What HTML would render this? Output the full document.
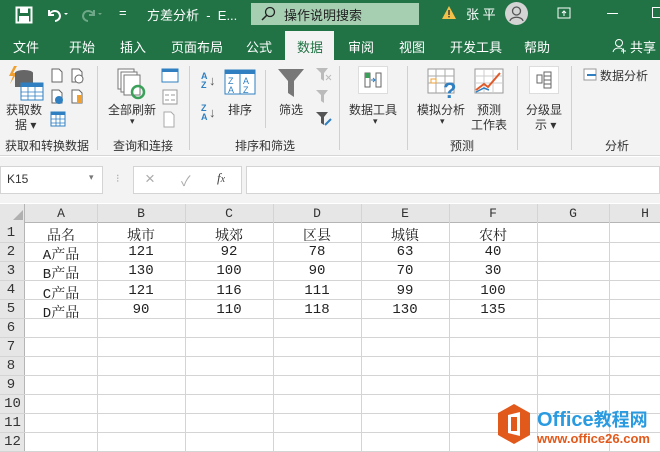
<!DOCTYPE html>
<html><head><meta charset="utf-8"><style>
*{margin:0;padding:0;box-sizing:border-box}
body{width:660px;height:452px;overflow:hidden;position:relative;background:#fff;font-family:"Liberation Sans","Noto Sans CJK SC",sans-serif}
.a{position:absolute}
.t{color:#fff;font-size:13px;position:absolute;white-space:nowrap}
.r{font-size:12px;color:#333;position:absolute;white-space:nowrap}
.ic{position:absolute}
.cell{position:absolute;font-family:"Liberation Mono","Noto Serif CJK SC",serif;font-size:14px;color:#222;text-align:center;white-space:nowrap;margin-top:1px}
.hd{position:absolute;font-family:"Liberation Mono","Noto Serif CJK SC",serif;font-size:13px;color:#333;text-align:center}
.vl{position:absolute;top:204px;width:1px;height:248px;background:#d4d4d4}
.hl{position:absolute;left:0;height:1px;width:660px;background:#d4d4d4}
.sep{position:absolute;width:1px;background:#d0d0d0;top:66px;height:84px}
</style></head><body>
<div class="a" style="left:0;top:0;width:660px;height:60px;background:#217346"></div>
<svg class="ic" style="left:15px;top:6px" width="18" height="18" viewBox="0 0 18 18"><rect x="1.5" y="1.5" width="15" height="15" fill="none" stroke="#fff" stroke-width="2"/><rect x="5" y="2" width="8" height="5" fill="#fff"/><rect x="4" y="10" width="10" height="6" fill="#fff"/></svg>
<svg class="ic" style="left:46px;top:6px" width="22" height="16" viewBox="0 0 22 16"><path d="M3 4v5h5M3 9c2-5 10-6 11 1 0 3-3 5-5 5" fill="none" stroke="#fff" stroke-width="2"/><path d="M18 7l2 2 2-2z" fill="#fff"/></svg>
<svg class="ic" style="left:80px;top:6px" width="22" height="16" viewBox="0 0 22 16"><path d="M14 4v5H9M14 9C12 4 4 3 3 10c0 3 3 5 5 5" fill="none" stroke="#6fa889" stroke-width="2"/><path d="M18 7l2 2 2-2z" fill="#6fa889"/></svg>
<div class="t" style="left:119px;top:5px">=</div>
<div class="t" style="left:147px;top:5px">方差分析 &nbsp;- &nbsp;E...</div>
<div class="a" style="left:251px;top:3px;width:168px;height:22px;background:#a6cfb2"></div>
<svg class="ic" style="left:260px;top:6px" width="16" height="16" viewBox="0 0 16 16"><circle cx="10" cy="6" r="4.5" fill="none" stroke="#222" stroke-width="1.3"/><path d="M7 9L2 14" stroke="#222" stroke-width="1.5"/></svg>
<div class="a" style="left:284px;top:5px;font-size:13px;color:#222">操作说明搜索</div>
<svg class="ic" style="left:441px;top:5px" width="16" height="15" viewBox="0 0 16 15"><path d="M8 1L15 14H1z" fill="#f2c14a"/><rect x="7.3" y="5" width="1.4" height="5" fill="#333"/><rect x="7.3" y="11" width="1.4" height="1.4" fill="#333"/></svg>
<div class="t" style="left:466px;top:4px">张 平</div>
<div class="a" style="left:505px;top:2px;width:23px;height:23px;border-radius:50%;background:#d4d4d4"></div>
<svg class="ic" style="left:505px;top:2px" width="23" height="23" viewBox="0 0 23 23"><circle cx="11.5" cy="9" r="4" fill="none" stroke="#555" stroke-width="1.3"/><path d="M5 19c1-5 12-5 13 0" fill="none" stroke="#555" stroke-width="1.3"/></svg>
<svg class="ic" style="left:557px;top:7px" width="14" height="12"><rect x="1" y="1" width="12" height="10" fill="none" stroke="#fff"/><path d="M7 9V4M5 6l2-2 2 2" stroke="#fff" fill="none"/></svg>
<div class="a" style="left:607px;top:13px;width:11px;height:1px;background:#fff"></div>
<div class="a" style="left:652px;top:7px;width:10px;height:11px;border:1px solid #fff"></div>
<div class="t" style="left:13px;top:37px">文件</div>
<div class="t" style="left:69px;top:37px">开始</div>
<div class="t" style="left:120px;top:37px">插入</div>
<div class="t" style="left:171px;top:37px">页面布局</div>
<div class="t" style="left:246px;top:37px">公式</div>
<div class="a" style="left:285px;top:31px;width:49px;height:30px;background:#f3f3f3"></div>
<div class="a" style="left:297px;top:37px;font-size:13px;color:#217346">数据</div>
<div class="t" style="left:348px;top:37px">审阅</div>
<div class="t" style="left:399px;top:37px">视图</div>
<div class="t" style="left:450px;top:37px">开发工具</div>
<div class="t" style="left:524px;top:37px">帮助</div>
<svg class="ic" style="left:612px;top:38px" width="14" height="16"><circle cx="7" cy="5" r="3.5" fill="none" stroke="#fff"/><path d="M1 14c1-5 9-5 10-2M9 13h5M11.5 10.5v5" stroke="#fff" fill="none"/></svg>
<div class="t" style="left:630px;top:37px">共享</div>
<div class="a" style="left:0;top:60px;width:660px;height:96px;background:#f3f3f3;border-bottom:1px solid #d6d6d6"></div>
<div class="sep" style="left:97px"></div><div class="sep" style="left:189px"></div><div class="sep" style="left:339px"></div><div class="sep" style="left:407px"></div><div class="sep" style="left:517px"></div><div class="sep" style="left:571px"></div>
<div class="a" style="left:265px;top:70px;width:1px;height:58px;background:#d0d0d0"></div>
<svg class="ic" style="left:8px;top:66px" width="36" height="36"><path d="M6 0L1 10h4l-3 8 7-11H5l4-7z" fill="#f0a030"/><ellipse cx="16" cy="7" rx="9" ry="3" fill="#666"/><rect x="7" y="7" width="18" height="14" fill="#666"/><rect x="13" y="17" width="22" height="17" fill="#fff" stroke="#2f7fc1"/><rect x="13" y="17" width="22" height="4" fill="#2f7fc1"/><path d="M13 26h22M13 30h22M20 21v13M27 21v13" stroke="#2f7fc1" stroke-width=".8"/></svg>
<div class="r" style="left:6px;top:101px">获取数</div>
<div class="r" style="left:15px;top:116px">据 ▾</div>
<svg class="ic" style="left:50px;top:68px" width="40" height="64" viewBox="0 0 40 64"><g fill="#fff" stroke="#666"><path d="M2 1h7l3 3v10H2z"/><path d="M22 1h7l3 3v10H22z"/><path d="M2 22h7l3 3v10H2z"/><path d="M22 22h7l3 3v10H22z"/></g><circle cx="29" cy="11" r="4" fill="#fff" stroke="#666"/><circle cx="9" cy="32" r="4" fill="#2f7fc1"/><rect x="27" y="27" width="5" height="8" fill="#f0a030"/><rect x="1" y="44" width="14" height="14" fill="#fff" stroke="#2f7fc1"/><rect x="1" y="44" width="14" height="3" fill="#2f7fc1"/><path d="M1 51h14M1 55h14M6 47v11M10 47v11" stroke="#2f7fc1" stroke-width=".8"/></svg>
<div class="r" style="left:5px;top:137px">获取和转换数据</div>
<svg class="ic" style="left:117px;top:68px" width="30" height="32"><g fill="#fff" stroke="#777"><rect x="1" y="1" width="16" height="20"/><rect x="4" y="4" width="16" height="20"/><rect x="7" y="7" width="16" height="20"/></g><circle cx="21" cy="24" r="6" fill="none" stroke="#3aa05a" stroke-width="2.5"/></svg>
<div class="r" style="left:108px;top:101px">全部刷新</div>
<div class="r" style="left:130px;top:116px;font-size:9px">▾</div>
<svg class="ic" style="left:160px;top:67px" width="20" height="64"><rect x="2" y="2" width="16" height="13" fill="#fff" stroke="#2f7fc1"/><rect x="2" y="2" width="16" height="3" fill="#2f7fc1"/><rect x="3" y="23" width="14" height="14" fill="#fff" stroke="#999"/><path d="M5 28h4M5 33h4M11 28h4M11 33h4" stroke="#999"/><path d="M4 45h7l3 3v12H4z" fill="#fff" stroke="#aaa"/></svg>
<div class="r" style="left:113px;top:137px">查询和连接</div>
<div class="a" style="left:201px;top:72px;font-size:9px;line-height:9px;color:#2f7fc1;font-weight:bold">A<br>Z</div><div class="a" style="left:209px;top:73px;font-size:13px;color:#555">↓</div>
<div class="a" style="left:201px;top:104px;font-size:9px;line-height:9px;color:#2f7fc1;font-weight:bold">Z<br>A</div><div class="a" style="left:209px;top:105px;font-size:13px;color:#555">↓</div>
<svg class="ic" style="left:224px;top:69px" width="32" height="26"><rect x="1" y="1" width="30" height="24" fill="#fff" stroke="#2f7fc1"/><rect x="1" y="1" width="30" height="4" fill="#2f7fc1"/><line x1="16" y1="5" x2="16" y2="25" stroke="#2f7fc1"/><text x="4" y="15" font-size="9" fill="#2f7fc1" font-family="Liberation Sans">Z</text><text x="19" y="15" font-size="9" fill="#2f7fc1" font-family="Liberation Sans">A</text><text x="4" y="24" font-size="9" fill="#2f7fc1" font-family="Liberation Sans">A</text><text x="19" y="24" font-size="9" fill="#2f7fc1" font-family="Liberation Sans">Z</text></svg>
<div class="r" style="left:228px;top:101px">排序</div>
<svg class="ic" style="left:277px;top:68px" width="28" height="30"><path d="M1 1h26L17 13v16l-6-4V13z" fill="#777"/></svg>
<div class="r" style="left:279px;top:101px">筛选</div>
<svg class="ic" style="left:315px;top:67px" width="18" height="64"><path d="M1 1h12L9 6v8l-3-2V6z" fill="#bbb"/><path d="M11 8l5 5M16 8l-5 5" stroke="#bbb"/><path d="M1 23h12L9 28v8l-3-2v-6z" fill="#bbb"/><path d="M1 45h12L9 50v8l-3-2v-6z" fill="#555"/><path d="M10 58l6-6" stroke="#2f7fc1" stroke-width="2"/></svg>
<div class="r" style="left:235px;top:137px">排序和筛选</div>
<div class="a" style="left:358px;top:66px;width:30px;height:28px;background:#fff;border:1px solid #ddd"></div>
<svg class="ic" style="left:364px;top:72px" width="18" height="16"><rect x="1" y="1" width="5" height="14" fill="none" stroke="#666"/><rect x="12" y="1" width="5" height="14" fill="none" stroke="#666"/><rect x="1" y="1" width="5" height="5" fill="#3aa05a"/><path d="M7 8h4M9 6l2 2-2 2" stroke="#2f7fc1" fill="none"/></svg>
<div class="r" style="left:349px;top:101px">数据工具</div>
<div class="r" style="left:373px;top:116px;font-size:9px">▾</div>
<svg class="ic" style="left:427px;top:68px" width="34" height="30"><rect x="1" y="1" width="26" height="24" fill="#fff" stroke="#999"/><path d="M1 8h26M1 15h26M9 1v24M18 1v24" stroke="#aaa"/><rect x="4" y="11" width="5" height="4" fill="none" stroke="#f0a030"/><text x="16" y="30" font-size="22" font-weight="bold" fill="#2f7fc1" font-family="Liberation Sans">?</text></svg>
<div class="r" style="left:417px;top:101px">模拟分析</div>
<div class="r" style="left:440px;top:116px;font-size:9px">▾</div>
<svg class="ic" style="left:474px;top:68px" width="30" height="28"><rect x="1" y="1" width="28" height="24" fill="#fff" stroke="#999"/><path d="M1 8h28M1 15h28M10 1v24M19 1v24" stroke="#ccc"/><path d="M2 22l8-6 4 3 12-14" stroke="#e05a2a" stroke-width="2" fill="none"/><path d="M2 24l8-4 5 2" stroke="#2f7fc1" stroke-width="1.5" fill="none"/></svg>
<div class="r" style="left:477px;top:101px">预测</div>
<div class="r" style="left:471px;top:116px">工作表</div>
<div class="r" style="left:450px;top:137px">预测</div>
<div class="a" style="left:529px;top:66px;width:30px;height:28px;background:#fff;border:1px solid #ddd"></div>
<svg class="ic" style="left:536px;top:71px" width="16" height="18"><rect x="1" y="4" width="5" height="8" fill="none" stroke="#666"/><rect x="8" y="1" width="7" height="16" fill="none" stroke="#666"/><path d="M8 5h7M8 9h7M8 13h7" stroke="#666"/></svg>
<div class="r" style="left:526px;top:101px">分级显</div>
<div class="r" style="left:535px;top:116px">示 ▾</div>
<svg class="ic" style="left:583px;top:68px" width="14" height="13"><rect x="1" y="1" width="12" height="11" fill="#fff" stroke="#999"/><path d="M4 7h9" stroke="#2f7fc1" stroke-width="2"/></svg>
<div class="r" style="left:600px;top:67px">数据分析</div>
<div class="r" style="left:605px;top:137px">分析</div>
<div class="a" style="left:0;top:157px;width:660px;height:46px;background:#f3f3f3"></div>
<div class="a" style="left:0;top:166px;width:103px;height:28px;background:#fff;border:1px solid #d4d4d4"></div>
<div class="a" style="left:7px;top:172px;font-size:12px;color:#333">K15</div>
<div class="a" style="left:89px;top:172px;font-size:9px;color:#777">▾</div>
<div class="a" style="left:116px;top:172px;font-size:11px;color:#aaa">⁝</div>
<div class="a" style="left:133px;top:166px;width:109px;height:28px;background:#fff;border:1px solid #d4d4d4"></div>
<div class="a" style="left:145px;top:169px;font-size:17px;color:#aaa">×</div>
<div class="a" style="left:181px;top:171px;font-size:14px;color:#aaa">✓</div>
<div class="a" style="left:217px;top:170px;font-size:13px;color:#444;font-style:italic;font-family:'Liberation Serif',serif">f<span style="font-size:10px">x</span></div>
<div class="a" style="left:246px;top:166px;width:414px;height:28px;background:#fff;border:1px solid #d4d4d4"></div>
<div class="a" style="left:0;top:204px;width:660px;height:19px;background:#e6e6e6;border-bottom:1px solid #b5b5b5"></div>
<div class="a" style="left:0;top:204px;width:25px;height:248px;background:#e6e6e6;border-right:1px solid #b5b5b5"></div>
<svg class="ic" style="left:13px;top:210px" width="10" height="10"><path d="M10 0v10H0z" fill="#b0b0b0"/></svg>
<div class="vl" style="left:97px"></div><div class="vl" style="left:185px"></div><div class="vl" style="left:273px"></div><div class="vl" style="left:361px"></div><div class="vl" style="left:449px"></div><div class="vl" style="left:537px"></div><div class="vl" style="left:609px"></div>
<div class="hl" style="top:242px"></div><div class="hl" style="top:261px"></div><div class="hl" style="top:280px"></div><div class="hl" style="top:299px"></div><div class="hl" style="top:318px"></div><div class="hl" style="top:337px"></div><div class="hl" style="top:356px"></div><div class="hl" style="top:375px"></div><div class="hl" style="top:394px"></div><div class="hl" style="top:413px"></div><div class="hl" style="top:432px"></div><div class="hl" style="top:451px"></div>
<div class="hd" style="left:25px;top:206px;width:72px">A</div><div class="hd" style="left:97px;top:206px;width:88px">B</div><div class="hd" style="left:185px;top:206px;width:88px">C</div><div class="hd" style="left:273px;top:206px;width:88px">D</div><div class="hd" style="left:361px;top:206px;width:88px">E</div><div class="hd" style="left:449px;top:206px;width:88px">F</div><div class="hd" style="left:537px;top:206px;width:72px">G</div><div class="hd" style="left:609px;top:206px;width:72px">H</div>
<div class="hd" style="left:0;top:225px;width:22px;font-size:14px">1</div><div class="hd" style="left:0;top:244px;width:22px;font-size:14px">2</div><div class="hd" style="left:0;top:263px;width:22px;font-size:14px">3</div><div class="hd" style="left:0;top:282px;width:22px;font-size:14px">4</div><div class="hd" style="left:0;top:301px;width:22px;font-size:14px">5</div><div class="hd" style="left:0;top:320px;width:22px;font-size:14px">6</div><div class="hd" style="left:0;top:339px;width:22px;font-size:14px">7</div><div class="hd" style="left:0;top:358px;width:22px;font-size:14px">8</div><div class="hd" style="left:0;top:377px;width:22px;font-size:14px">9</div><div class="hd" style="left:0;top:396px;width:25px;font-size:14px">10</div><div class="hd" style="left:0;top:415px;width:25px;font-size:14px">11</div><div class="hd" style="left:0;top:434px;width:25px;font-size:14px">12</div>
<div class="cell" style="left:25px;top:224px;width:72px">品名</div><div class="cell" style="left:97px;top:224px;width:88px">城市</div><div class="cell" style="left:185px;top:224px;width:88px">城郊</div><div class="cell" style="left:273px;top:224px;width:88px">区县</div><div class="cell" style="left:361px;top:224px;width:88px">城镇</div><div class="cell" style="left:449px;top:224px;width:88px">农村</div>
<div class="cell" style="left:25px;top:243px;width:72px">A产品</div><div class="cell" style="left:97px;top:243px;width:88px">121</div><div class="cell" style="left:185px;top:243px;width:88px">92</div><div class="cell" style="left:273px;top:243px;width:88px">78</div><div class="cell" style="left:361px;top:243px;width:88px">63</div><div class="cell" style="left:449px;top:243px;width:88px">40</div>
<div class="cell" style="left:25px;top:262px;width:72px">B产品</div><div class="cell" style="left:97px;top:262px;width:88px">130</div><div class="cell" style="left:185px;top:262px;width:88px">100</div><div class="cell" style="left:273px;top:262px;width:88px">90</div><div class="cell" style="left:361px;top:262px;width:88px">70</div><div class="cell" style="left:449px;top:262px;width:88px">30</div>
<div class="cell" style="left:25px;top:282px;width:72px">C产品</div><div class="cell" style="left:97px;top:282px;width:88px">121</div><div class="cell" style="left:185px;top:282px;width:88px">116</div><div class="cell" style="left:273px;top:282px;width:88px">111</div><div class="cell" style="left:361px;top:282px;width:88px">99</div><div class="cell" style="left:449px;top:282px;width:88px">100</div>
<div class="cell" style="left:25px;top:301px;width:72px">D产品</div><div class="cell" style="left:97px;top:301px;width:88px">90</div><div class="cell" style="left:185px;top:301px;width:88px">110</div><div class="cell" style="left:273px;top:301px;width:88px">118</div><div class="cell" style="left:361px;top:301px;width:88px">130</div><div class="cell" style="left:449px;top:301px;width:88px">135</div>
<svg class="ic" style="left:496px;top:403px" width="36" height="42" viewBox="0 0 36 42"><path d="M18 1l16 9v22l-16 9-16-9V10z" fill="#e2591c"/><path d="M12 12l12-3v24l-12-3z" fill="#fff"/><rect x="15" y="14" width="6" height="14" fill="#e2591c"/></svg>
<div class="a" style="left:537px;top:406px;font-size:20px;font-weight:bold;color:#2a9be0;white-space:nowrap">Office<span style="font-size:18px">教程网</span></div>
<div class="a" style="left:537px;top:431px;font-size:13px;font-weight:bold;color:#e2591c;white-space:nowrap">www.office26.com</div>
</body></html>
